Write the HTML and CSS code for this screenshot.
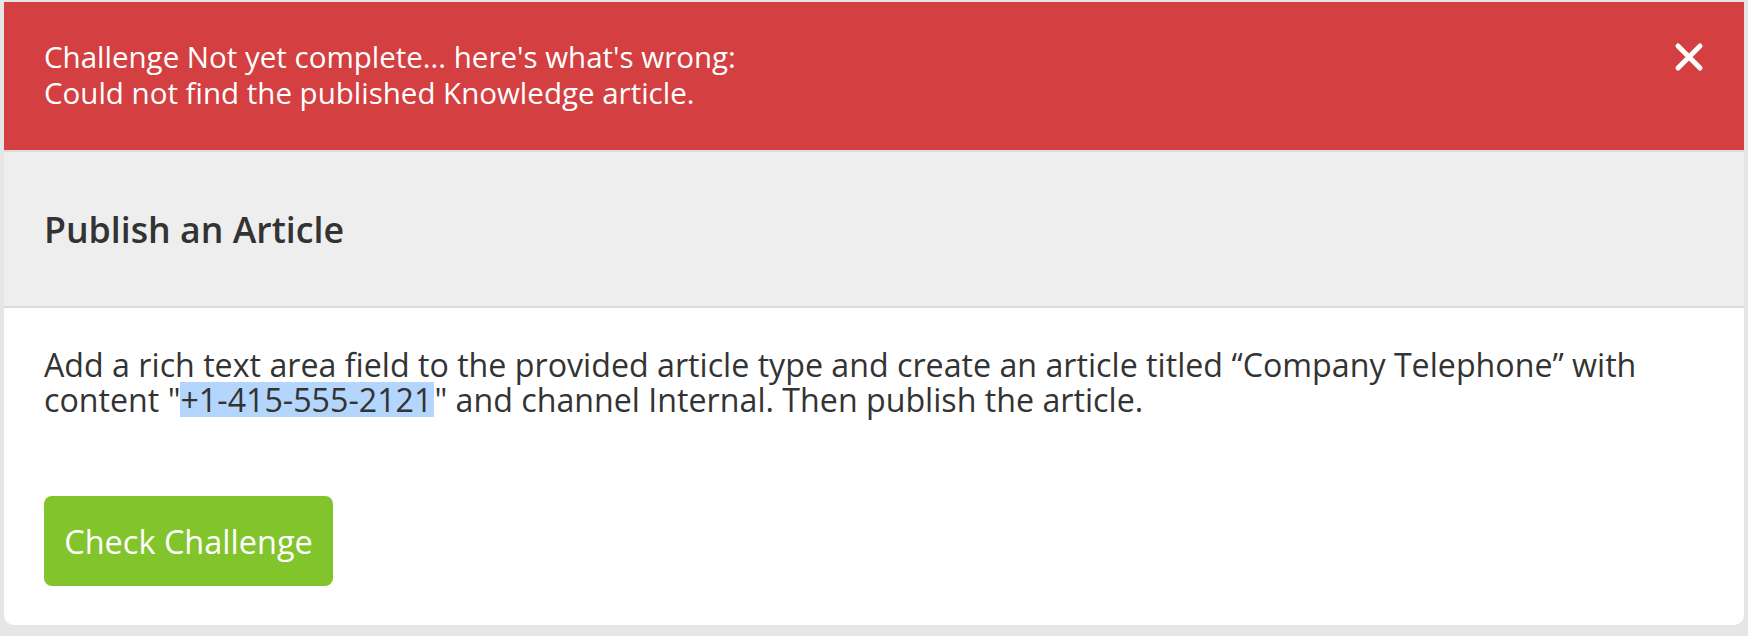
FILE: index.html
```html
<!DOCTYPE html>
<html lang="en">
<head>
  <meta charset="UTF-8">
  <meta name="viewport" content="width=device-width, initial-scale=1.0">
  <title>Publish an Article</title>
  <link rel="stylesheet" href="styles.css">
</head>
<body>
  <div class="challenge-card">
    <div class="alert-error">
      <p class="alert-text">Challenge Not yet complete... here's what's wrong:<br>Could not find the published Knowledge article.</p>
      <button class="alert-close" aria-label="Close">
        <svg width="30" height="30" viewBox="0 0 30 30">
          <path d="M4 4 L26 26 M26 4 L4 26" stroke="#ffffff" stroke-width="5" stroke-linecap="round" fill="none"/>
        </svg>
      </button>
    </div>

    <div class="challenge-header">
      <h2>Publish an Article</h2>
    </div>

    <div class="challenge-body">
      <p class="challenge-desc">Add a rich text area field to the provided article type and create an article titled “Company Telephone” with content "<span class="selected">+1-415-555-2121</span>" and channel Internal. Then publish the article.</p>
      <button class="check-btn">Check Challenge</button>
    </div>
  </div>
</body>
</html>
```

FILE: styles.css
```css
body {
  margin: 0;
  padding: 2px 4px 11px 4px;
  background-color: #e6e6e6;
  font-family: 'Open Sans', sans-serif;
}

.challenge-card {
  background-color: #ffffff;
  border-radius: 0 0 10px 10px;
  overflow: hidden;
}

.alert-error {
  height: 148px;
  background-color: #d43f42;
  color: #ffffff;
  display: flex;
  align-items: flex-start;
  justify-content: space-between;
  padding: 37px 40px 0 40px;
  box-sizing: border-box;
}

.alert-text {
  margin: 0;
  font-size: 29.5px;
  line-height: 36px;
}

.alert-close {
  background: none;
  border: none;
  padding: 0;
  width: 30px;
  height: 30px;
  margin-top: 3px;
  cursor: pointer;
}

.alert-close svg {
  display: block;
}

.challenge-header {
  height: 154px;
  background-color: #eeeeee;
  border-top: 2px solid #dcdcdc;
  border-bottom: 2px solid #dcdcdc;
  display: flex;
  align-items: center;
  padding: 0 40px;
}

.challenge-header h2 {
  margin: 0;
  font-size: 35.7px;
  line-height: 40px;
  font-weight: 600;
  color: #333333;
}

.challenge-body {
  padding: 39px 40px 39px 40px;
}

.challenge-desc {
  margin: 0 0 79px 0;
  font-size: 32.2px;
  line-height: 35px;
  color: #333333;
}

.selected {
  display: inline-block;
  padding-right: 2px;
  background-color: #b4d6fc;
}

.check-btn {
  display: block;
  width: 289px;
  height: 90px;
  background-color: #82c42b;
  color: #ffffff;
  border: none;
  border-radius: 8px;
  font-family: 'Open Sans', sans-serif;
  font-size: 32.5px;
  cursor: pointer;
}
```
